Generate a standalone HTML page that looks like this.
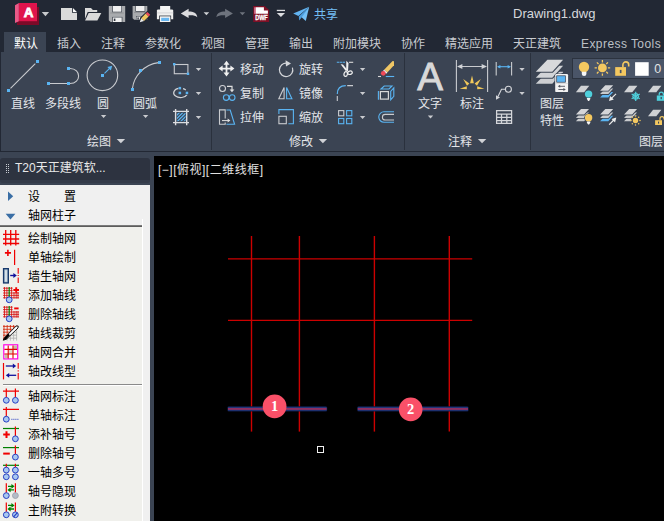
<!DOCTYPE html>
<html lang="zh-CN">
<head>
<meta charset="utf-8">
<title>Drawing1.dwg</title>
<style>
html,body{margin:0;padding:0;}
body{width:664px;height:521px;overflow:hidden;background:#3b4453;position:relative;
 font-family:"Liberation Sans","Noto Sans CJK SC",sans-serif;font-size:12px;color:#e0e0e0;}
.abs{position:absolute;}
.t{position:absolute;white-space:nowrap;line-height:16px;height:16px;font-size:12px;}
#titlebar{left:0;top:0;width:664px;height:31px;background:#222834;}
#tabs{left:0;top:31px;width:664px;height:21px;background:#222834;}
#tabactive{left:4px;top:32px;width:42px;height:20px;background:#3b4453;}
.tab{color:#c9ccd1;top:36px;}
#ribbon{left:1px;top:52px;width:663px;height:99px;background:#3b4453;}
#rline{left:0;top:151px;width:664px;height:1px;background:#222834;}
#ledge{left:0;top:52px;width:1px;height:99px;background:#222834;}
.sep{position:absolute;top:53px;width:1px;height:97px;background:#2a313d;}
.rl{color:#e4e6ea;}
svg{position:absolute;overflow:visible;}
.dd{position:absolute;width:0;height:0;border-left:3px solid transparent;border-right:3px solid transparent;border-top:3px solid #c9ccd1;}
.dd2{position:absolute;width:0;height:0;border-left:4px solid transparent;border-right:4px solid transparent;border-top:4px solid #c9ccd1;}
#canvas{left:154px;top:156px;width:510px;height:365px;background:#000;}
#ptitle{left:0;top:158px;width:150px;height:22px;background:#2d3340;border-radius:3px 3px 0 0;}
#ptitle2{left:0;top:180px;width:150px;height:2.6px;background:#343b49;border-radius:0 0 3px 3px;}
#pbody{left:0;top:185px;width:150px;height:336px;background:#f0f0f0;}
.mi{position:absolute;left:28px;white-space:nowrap;color:#000;font-size:12px;line-height:16px;height:16px;}
</style>
</head>
<body>
<div id="titlebar" class="abs"></div>
<div id="tabs" class="abs"></div>
<div id="tabactive" class="abs"></div>
<div id="ribbon" class="abs"></div>
<div id="rline" class="abs"></div>
<div id="ledge" class="abs"></div>
<div id="canvas" class="abs"></div>
<div id="ptitle" class="abs"></div>
<div id="ptitle2" class="abs"></div>
<div id="pbody" class="abs"></div>


<!-- TITLE ICONS -->
<svg style="left:0;top:0;" width="350" height="31" viewBox="0 0 350 31">
 <!-- logo -->
 <path d="M17,21 H37 V7 H39 V24.9 H17 Z" fill="#7c0a28"/>
 <polygon points="15,5.3 18.9,3 18.9,21.2 15,22.9" fill="#ea5a88"/>
 <rect x="18.9" y="3" width="18.1" height="18.2" fill="#e0144c"/>
 <text x="28.5" y="16.6" font-family="Liberation Sans, sans-serif" font-weight="bold" font-size="13.4" fill="#fff" stroke="#fff" stroke-width="0.8" text-anchor="middle">A</text>
 <polygon points="41.8,11.9 49.1,11.9 45.45,16.2" fill="#c8cacd"/>
 <!-- new -->
 <path d="M61,8 H72 V12.8 H77 V19.9 H61 Z" fill="#dadada"/>
 <path d="M72.9,8.1 L76.9,12 H72.9 Z" fill="#fcfcfc"/>
 <!-- open -->
 <path d="M85,18.8 V8 H91 L92.9,9.9 H97.2 V11.9 H87.7 Z" fill="#dadada"/>
 <path d="M88.7,13.1 H101.3 L97.4,20.4 H85.1 Z" fill="#dadada"/>
 <!-- save -->
 <path d="M108.8,6 H125.2 V22 H110.6 L108.8,20.2 Z" fill="#a9abae"/>
 <rect x="112.2" y="5.4" width="9.8" height="7" fill="#222834" opacity="0.75"/>
 <rect x="112.9" y="6" width="8.4" height="5.7" fill="#f0f0f0"/>
 <rect x="110.2" y="12.6" width="13.6" height="0.8" fill="#8c8e92"/>
 <rect x="112.2" y="16.9" width="10.2" height="5.1" fill="#222834" opacity="0.75"/>
 <rect x="112.9" y="17.5" width="8.8" height="4.5" fill="#f0f0f0"/>
 <rect x="113.8" y="18.6" width="1.6" height="2.4" fill="#30353f"/>
 <!-- save as -->
 <path d="M132.6,6 H147.3 V19.7 H134.2 L132.6,18.2 Z" fill="#a9abae"/>
 <rect x="135.4" y="5.4" width="9.8" height="6.3" fill="#222834" opacity="0.75"/>
 <rect x="136" y="6" width="8.6" height="5" fill="#f0f0f0"/>
 <rect x="134" y="12" width="12" height="0.8" fill="#8c8e92"/>
 <rect x="136" y="16" width="5.6" height="3.7" fill="#222834" opacity="0.75"/>
 <rect x="136.6" y="16.6" width="4.4" height="3.1" fill="#f0f0f0"/>
 <rect x="137.4" y="17.4" width="1.4" height="2.3" fill="#30353f"/>
 <polygon points="138.6,23.4 140.2,17.6 147.4,10.8 151.4,14.8 144.4,22" fill="#222834"/>
 <polygon points="141.2,18.2 145.8,13.6 148.6,16.4 144,21" fill="#f0c860"/>
 <polygon points="145.8,13.6 147.4,12 150.2,14.8 148.6,16.4" fill="#ec4a5a"/>
 <polygon points="139.8,22.2 141.2,18.2 144,21" fill="#ececec"/>
 <!-- print -->
 <rect x="160.1" y="6" width="10.1" height="4.4" fill="#f4f4f4"/>
 <path d="M156.9,10.6 Q156.9,9.4 158.1,9.4 H172 Q173.2,9.4 173.2,10.6 V19.2 H156.9 Z" fill="#f0f0f0"/>
 <rect x="156.9" y="12.4" width="16.3" height="1" fill="#d4d5d8"/>
 <rect x="159.2" y="15.6" width="11.9" height="6.8" fill="#222834"/>
 <rect x="159.9" y="16.3" width="10.5" height="5.7" fill="#f4f4f4"/>
 <rect x="161.2" y="17.8" width="7.9" height="3.2" fill="#68b6f0"/>
 <!-- undo -->
 <path d="M180.8,13.4 L188.6,8.7 V11.5 C193.6,11.5 196.8,13 197.3,17.2 C195.2,15.4 192.8,15.1 188.6,15.3 V18.1 Z" fill="#dcdcde"/>
 <polygon points="203.6,12.2 209.2,12.2 206.4,15.3" fill="#d0d2d5"/>
 <!-- redo -->
 <path d="M232.9,13.4 L225.1,8.7 V11.5 C220.1,11.5 216.9,13 216.4,17.2 C218.5,15.4 220.9,15.1 225.1,15.3 V18.1 Z" fill="#6e737d"/>
 <polygon points="239.6,12.2 245.2,12.2 242.4,15.3" fill="#6e737d"/>
 <!-- dwf -->
 <path d="M253.2,6 H264.6 L269.1,10 V21.9 H253.2 Z" fill="#7e1026"/>
 <path d="M255.8,7.3 H263.9 V10.5 H267.9 V13.8 H255.8 Z" fill="#ffffff"/>
 <rect x="254.3" y="7.3" width="1.5" height="6.5" fill="#e88ca6"/>
 <text x="261.45" y="19.9" font-family="Liberation Sans, sans-serif" font-weight="bold" font-size="6.4" fill="#fff" stroke="#fff" stroke-width="0.3" text-anchor="middle" textLength="12.6" lengthAdjust="spacingAndGlyphs">DWF</text>
 <!-- customize -->
 <rect x="276.8" y="9.8" width="8.2" height="1.3" fill="#dcdde0"/>
 <polygon points="276.8,12.9 285,12.9 280.9,17.1" fill="#dcdde0"/>
 <!-- share plane -->
 <polygon points="293.2,13.6 309.2,6.7 298.4,16" fill="#62b4f2"/>
 <polygon points="309.2,6.7 305.8,20.9 300.8,16.6" fill="#74c0f6"/>
 <polygon points="309.2,6.7 298.8,16.6 299.2,20.6 301.6,17.6" fill="#4c9ede"/>
</svg>
<!-- TITLE -->
<div class="t" style="left:314px;top:7px;color:#74bef4;">共享</div>
<div class="t" style="left:513px;top:6px;color:#d6d8dc;font-size:13px;letter-spacing:0px;">Drawing1.dwg</div>

<!-- TABS -->
<div class="t tab" style="left:14px;color:#fff;">默认</div>
<div class="t tab" style="left:57px;">插入</div>
<div class="t tab" style="left:101px;">注释</div>
<div class="t tab" style="left:145px;">参数化</div>
<div class="t tab" style="left:201px;">视图</div>
<div class="t tab" style="left:245px;">管理</div>
<div class="t tab" style="left:289px;">输出</div>
<div class="t tab" style="left:333px;">附加模块</div>
<div class="t tab" style="left:401px;">协作</div>
<div class="t tab" style="left:445px;">精选应用</div>
<div class="t tab" style="left:513px;">天正建筑</div>
<div class="t tab" style="left:581px;letter-spacing:0.43px;color:#bcc0c6;">Express Tools</div>

<!-- RIBBON LABELS -->
<div class="t rl" style="left:11px;top:96px;">直线</div>
<div class="t rl" style="left:45px;top:96px;">多段线</div>
<div class="t rl" style="left:97px;top:96px;">圆</div>
<div class="t rl" style="left:133px;top:96px;">圆弧</div>
<div class="t rl" style="left:87px;top:134px;">绘图</div>
<div class="t rl" style="left:240px;top:62px;">移动</div>
<div class="t rl" style="left:240px;top:86px;">复制</div>
<div class="t rl" style="left:240px;top:110px;">拉伸</div>
<div class="t rl" style="left:299px;top:62px;">旋转</div>
<div class="t rl" style="left:299px;top:86px;">镜像</div>
<div class="t rl" style="left:299px;top:110px;">缩放</div>
<div class="t rl" style="left:289px;top:134px;">修改</div>
<div class="t rl" style="left:418px;top:96px;">文字</div>
<div class="t rl" style="left:460px;top:96px;">标注</div>
<div class="t rl" style="left:448px;top:134px;">注释</div>
<div class="t rl" style="left:540px;top:96px;">图层</div>
<div class="t rl" style="left:540px;top:113px;">特性</div>
<div class="t rl" style="left:639px;top:134px;">图层</div>

<div class="sep" style="left:211px;"></div>
<div class="sep" style="left:404px;"></div>
<div class="sep" style="left:530px;"></div>

<!-- RIBBON ICONS -->
<svg style="left:0;top:0;" width="664" height="160" viewBox="0 0 664 160">
<line x1="10.5" y1="88.3" x2="35.3" y2="63.6" stroke="#c9cbcf" stroke-width="1.1"/>
<rect x="7" y="89" width="3" height="3" fill="#5ab4f2"/>
<rect x="36" y="60" width="3" height="3" fill="#5ab4f2"/>
<path d="M50,83.5 H67 M70,83.5 C81.5,83.5 81.5,68.5 70,68.5" fill="none" stroke="#c9cbcf" stroke-width="1.1"/>
<rect x="47" y="82" width="3" height="3" fill="#5ab4f2"/>
<rect x="67" y="82" width="3" height="3" fill="#5ab4f2"/>
<rect x="67" y="67" width="3" height="3" fill="#5ab4f2"/>
<circle cx="102.4" cy="75.3" r="15.3" fill="none" stroke="#c9cbcf" stroke-width="1.1"/>
<rect x="101" y="74" width="3" height="3" fill="#5ab4f2"/>
<line x1="104.5" y1="73.3" x2="109.6" y2="68.3" stroke="#5ab4f2" stroke-width="1.1"/>
<polygon points="112.2,65.8 110.9,70.6 107.4,67.1" fill="#5ab4f2"/>
<path d="M132.5,88 C134,76 144,64.5 158.5,62.6" fill="none" stroke="#c9cbcf" stroke-width="1.1"/>
<rect x="131" y="88" width="3" height="3" fill="#5ab4f2"/>
<rect x="139" y="69" width="3" height="3" fill="#5ab4f2"/>
<rect x="158" y="61" width="3" height="3" fill="#5ab4f2"/>
<polygon points="100.89999999999999,115 106.3,115 103.6,118" fill="#c9cbcf"/>
<polygon points="142.9,115 148.29999999999998,115 145.6,118" fill="#c9cbcf"/>
<polygon points="116.7,138.9 125.1,138.9 120.9,143.3" fill="#d0d2d6"/>
<rect x="174.3" y="64.5" width="13.6" height="9.2" fill="none" stroke="#c9cbcf" stroke-width="1.1"/>
<rect x="173" y="63" width="2.4" height="2.4" fill="#5ab4f2"/>
<rect x="186.8" y="72.6" width="2.4" height="2.4" fill="#5ab4f2"/>
<polygon points="195.8,68 201.2,68 198.5,71" fill="#c9cbcf"/>
<path d="M178.4,88.4 A6.9,4.7 0 1 0 187,94.6" fill="none" stroke="#d0d2d6" stroke-width="1.2"/>
<path d="M183,88.6 A6.9,4.7 0 0 1 185.8,89.9" fill="none" stroke="#d0d2d6" stroke-width="1.2"/>
<rect x="178.6" y="86.9" width="2.5" height="2.5" fill="#5ab4f2"/>
<rect x="178.6" y="91.7" width="2.5" height="2.5" fill="#5ab4f2"/>
<rect x="185" y="91" width="3.8" height="3.8" fill="#3b4453"/><rect x="185.7" y="91.7" width="2.5" height="2.5" fill="#5ab4f2"/>
<polygon points="195.8,92 201.2,92 198.5,95" fill="#c9cbcf"/>
<path d="M173,111.4 H189 M173,122.6 H189 M175.6,109 V125.2 M186.7,109 V125.2" fill="none" stroke="#dcdde0" stroke-width="1.4"/>
<clipPath id="hc"><rect x="176.9" y="112.8" width="8.7" height="8.5"/></clipPath>
<path clip-path="url(#hc)" d="M175,117 L181,111 M175,120.4 L184.4,111 M176.6,122.2 L187,111.8 M180,122.2 L187,115.2 M183.4,122.2 L187,118.6" stroke="#5ab4f2" stroke-width="1.25" fill="none"/>
<polygon points="195.8,116 201.2,116 198.5,119" fill="#c9cbcf"/>
<path d="M226.5,63 V74.4 M221,68.6 H232.2" stroke="#f0f0f0" stroke-width="1.8" fill="none"/>
<polygon points="226.5,60.8 229.5,64.8 223.5,64.8" fill="#f0f0f0"/><polygon points="226.5,76.4 229.5,72.4 223.5,72.4" fill="#f0f0f0"/><polygon points="218.6,68.6 222.6,65.6 222.6,71.6" fill="#f0f0f0"/><polygon points="234.4,68.6 230.4,65.6 230.4,71.6" fill="#f0f0f0"/>
<circle cx="222.5" cy="88.5" r="3" fill="none" stroke="#d0d2d6" stroke-width="1.1"/>
<path d="M227,86.4 H232 V90" fill="none" stroke="#e0e0e0" stroke-width="1.2"/><polygon points="229.6,89.4 234.4,89.4 232,92.2" fill="#e0e0e0"/>
<circle cx="226.2" cy="97.6" r="2.8" fill="none" stroke="#5ab4f2" stroke-width="1.1"/><circle cx="232.2" cy="97.6" r="2.8" fill="none" stroke="#5ab4f2" stroke-width="1.1"/>
<path d="M225.2,118.6 V109.9 H219.5 V124.2 H225.2 V122.6" fill="none" stroke="#c9cbcf" stroke-width="1.1"/>
<path d="M226.4,110 H230.2 L234.6,124.3 H226.4" fill="none" stroke="#5ab4f2" stroke-width="1.1"/>
<line x1="222" y1="120.6" x2="228" y2="120.6" stroke="#e0e0e0" stroke-width="1"/><polygon points="230.4,120.6 227.6,118.6 227.6,122.6" fill="#e0e0e0"/>
<path d="M287.3,63.3 A6.7,6.7 0 1 0 292.4,67.6" fill="none" stroke="#d4d6da" stroke-width="1.2"/>
<polygon points="291,63.6 285.6,60.2 286,66.6" fill="#d4d6da"/>
<polygon points="278.8,98.8 284.1,98.8 284.1,87.6" fill="none" stroke="#c9cbcf" stroke-width="1.1"/>
<polygon points="286.6,87.6 286.6,98.8 291.9,98.8" fill="none" stroke="#5ab4f2" stroke-width="1.1"/>
<rect x="278.9" y="116.3" width="7.4" height="7.4" fill="none" stroke="#c9cbcf" stroke-width="1.1"/>
<path d="M278.9,114 V109.6 H293.4 V123.7 H288.4" fill="none" stroke="#5ab4f2" stroke-width="1.1"/>
<polygon points="318.7,138.9 327.1,138.9 322.9,143.3" fill="#d0d2d6"/>
<line x1="336.8" y1="62.3" x2="345" y2="62.3" stroke="#5ab4f2" stroke-width="1.1" stroke-dasharray="2.4 0.5"/>
<line x1="349" y1="62.3" x2="353.2" y2="62.3" stroke="#d8d8d8" stroke-width="1.1"/>
<polygon points="340.6,64.2 343,64.4 347.4,70 345.8,71" fill="#f0f0f0"/><polygon points="346.3,60.8 348.5,63 348,71.2 346.2,70.6" fill="#f0f0f0"/>
<ellipse cx="345.7" cy="74" rx="1.7" ry="2.4" fill="none" stroke="#f0f0f0" stroke-width="1.2" transform="rotate(12 345.7 74)"/><ellipse cx="350" cy="72.7" rx="2.3" ry="1.7" fill="none" stroke="#f0f0f0" stroke-width="1.2" transform="rotate(-15 350 72.7)"/>
<polygon points="359.90000000000003,68 365.3,68 362.6,71" fill="#c9cbcf"/>
<polygon points="392.6,61 394,61.2 394,65.2 387.3,72.5 384.1,69.7" fill="#f0c765"/><polygon points="384.1,69.7 387.3,72.5 386.2,73.7 383,70.9" fill="#f4f4f4"/>
<circle cx="383.3" cy="73.3" r="2.4" fill="#f04a58"/>
<line x1="378" y1="76.5" x2="381" y2="76.5" stroke="#d8d8d8" stroke-width="1.1"/><line x1="385.8" y1="76.5" x2="394.2" y2="76.5" stroke="#5ab4f2" stroke-width="1.1"/>
<path d="M337.3,94 C337.3,88.5 340.5,85.6 345.8,85.6" fill="none" stroke="#5ab4f2" stroke-width="1.2"/>
<path d="M337.3,96 V101 M347.2,85.6 H353" fill="none" stroke="#c9cbcf" stroke-width="1.1"/>
<polygon points="359.90000000000003,92 365.3,92 362.6,95" fill="#c9cbcf"/>
<rect x="380.4" y="91.6" width="8" height="7.5" fill="none" stroke="#d8d8d8" stroke-width="1.2"/>
<path d="M378.4,91 V99.8 M381,89 L384.2,86 H392 L389,89 Z M390.7,91.4 L393.8,88 V96.4 L390.7,99.8 Z" fill="none" stroke="#5ab4f2" stroke-width="1.1"/>
<rect x="338.6" y="110.6" width="5.2" height="5.2" fill="none" stroke="#c9cbcf" stroke-width="1.1"/>
<rect x="346.6" y="110.6" width="5.2" height="5.2" fill="none" stroke="#5ab4f2" stroke-width="1.1"/>
<rect x="338.6" y="118.5" width="5.2" height="5.2" fill="none" stroke="#5ab4f2" stroke-width="1.1"/>
<rect x="346.6" y="118.5" width="5.2" height="5.2" fill="none" stroke="#5ab4f2" stroke-width="1.1"/>
<polygon points="359.90000000000003,116 365.3,116 362.6,119" fill="#c9cbcf"/>
<path d="M394,111.8 H384 A5.25,5.25 0 0 0 384,122.3 H394" fill="none" stroke="#5ab4f2" stroke-width="1.1"/>
<path d="M394,114.4 H385.2 A2.8,2.8 0 0 0 385.2,120 H394" fill="none" stroke="#c9cbcf" stroke-width="1.1"/>
<text x="430.2" y="89.6" font-family="Liberation Sans, sans-serif" font-size="38.6" fill="#d8d8d8" stroke="#d8d8d8" stroke-width="0.9" text-anchor="middle">A</text>
<polygon points="427.8,115.4 433.2,115.4 430.5,118.4" fill="#c9cbcf"/>
<path d="M456.4,60 V92 M487.6,60 V92 M458,66.5 H486" fill="none" stroke="#c9cbcf" stroke-width="1.1"/>
<polygon points="457,66.5 462.4,64 462.4,69" fill="#d0d2d6"/><polygon points="487,66.5 481.6,64 481.6,69" fill="#d0d2d6"/>
<polygon points="472,75.4 473.9,83.2 470.1,83.2" fill="#f2c85a"/>
<polygon points="463.2,79 469.4,83.4 467,85.8" fill="#f2c85a"/><polygon points="480.8,79 474.6,83.4 477,85.8" fill="#f2c85a"/>
<polygon points="459.6,88.7 466.8,86.2 466.8,89.2" fill="#f2c85a"/><polygon points="484.4,88.7 477.2,86.2 477.2,89.2" fill="#f2c85a"/>
<path d="M496.2,62 V75.6 M511.6,62 V75.6" fill="none" stroke="#c9cbcf" stroke-width="1.1"/>
<line x1="498" y1="66.7" x2="510" y2="66.7" stroke="#5ab4f2" stroke-width="1.1"/><polygon points="497,66.7 500.4,65 500.4,68.4" fill="#5ab4f2"/><polygon points="511,66.7 507.6,65 507.6,68.4" fill="#5ab4f2"/>
<polygon points="519.3,68 524.7,68 522,71" fill="#c9cbcf"/>
<circle cx="508.4" cy="89.2" r="3" fill="none" stroke="#d4d6da" stroke-width="1.1"/>
<path d="M505.2,89.2 H501.5 L498,96.4" fill="none" stroke="#d4d6da" stroke-width="1.1"/><polygon points="496,99.8 496,95.2 500,97.5" fill="#d4d6da"/>
<polygon points="519.3,92 524.7,92 522,95" fill="#c9cbcf"/>
<path d="M496.6,110.6 H511.6 V123.4 H496.6 Z M496.6,114.2 H511.6 M496.6,117.4 H511.6 M496.6,120.5 H511.6 M501.5,114.2 V123.4 M506.8,114.2 V123.4" fill="none" stroke="#d4d6da" stroke-width="1.25"/>

<polygon points="477.9,138.9 486.3,138.9 482.1,143.3" fill="#d0d2d6"/>
</svg>
<!-- LAYERS -->
<svg style="left:0;top:0;" width="664" height="160" viewBox="0 0 664 160">
<polygon points="547.4,71.8 563.1,71.8 552.3,83.7 535.8,83.7" fill="#3b4453" stroke="#3b4453" stroke-width="2.3"/><polygon points="547.4,71.8 563.1,71.8 552.3,83.7 535.8,83.7" fill="#cdcfd2"/>
<polygon points="547.4,65.8 563.1,65.8 552.3,77.7 535.8,77.7" fill="#3b4453" stroke="#3b4453" stroke-width="2.3"/><polygon points="547.4,65.8 563.1,65.8 552.3,77.7 535.8,77.7" fill="#d2d4d7"/>
<polygon points="547.4,59.8 563.1,59.8 552.3,71.7 535.8,71.7" fill="#3b4453" stroke="#3b4453" stroke-width="2.3"/><polygon points="547.4,59.8 563.1,59.8 552.3,71.7 535.8,71.7" fill="#d8d9db"/>
<rect x="554.6" y="73.4" width="14" height="19.2" rx="1.8" fill="#3b4453"/>
<rect x="555.2" y="74" width="12.9" height="18.1" rx="1.2" fill="#f2f2f2"/>
<rect x="558.9" y="72" width="3.8" height="1" fill="#d0d2d6"/>
<rect x="556.7" y="75.8" width="8.8" height="6.4" fill="#5ab4f2" stroke="#3a4150" stroke-width="0.7"/>
<rect x="555.2" y="83" width="12.9" height="0.7" fill="#d4d4d4"/>
<path d="M559,86.3 H565 M558.4,89.5 H564.4" stroke="#50555f" stroke-width="0.9" fill="none"/>
<polygon points="557.8,86.3 560.2,84.8 560.2,87.8" fill="#50555f"/><polygon points="565.8,89.5 563.4,88 563.4,91" fill="#50555f"/>
<rect x="572.5" y="58.5" width="95" height="20" fill="#4a5568" stroke="#2c333f" stroke-width="1"/>
<circle cx="584" cy="67" r="5.2" fill="#f4c860"/><rect x="581.7" y="70" width="4.6" height="1.7" fill="#f4c860"/><path d="M581.8,71.7 H586.4 V74 Q586.4,75.9 584.1,75.9 Q581.8,75.9 581.8,74 Z" fill="#f6f6f6"/>
<circle cx="602.4" cy="67.9" r="4.4" fill="#f4c860"/>
<path d="M607.90,67.90 L610.20,67.90 M606.29,71.79 L607.92,73.42 M602.40,73.40 L602.40,75.70 M598.51,71.79 L596.88,73.42 M596.90,67.90 L594.60,67.90 M598.51,64.01 L596.88,62.38 M602.40,62.40 L602.40,60.10 M606.29,64.01 L607.92,62.38" stroke="#f4c860" stroke-width="1.3" fill="none"/>
<rect x="615.2" y="67.1" width="10.8" height="8.7" fill="#f4c860"/><rect x="619.8" y="69.9" width="1.7" height="3.2" fill="#4a5568"/>
<path d="M622.9,67.2 V64.8 A2.9,2.9 0 0 1 628.7,64.8 V66.4" fill="none" stroke="#f4c860" stroke-width="1.6"/>
<rect x="635.1" y="62.2" width="13.6" height="13.6" fill="#ffffff"/>
<text x="654.2" y="73" font-family="Liberation Sans, sans-serif" font-size="12.5" fill="#e4e4e4">0</text>
<polygon points="581.0,85.8 589.3,85.8 584.2,92.2 575.9,92.2" fill="#cfd1d4"/>
<circle cx="588.6" cy="94.1" r="4.3" fill="#3b4453"/><circle cx="588.6" cy="94.1" r="3.7" fill="#4fd0dc"/><path d="M586.9,98.0 H590.3000000000001 V99.1 L589.1,100.89999999999999 H588.1 L586.9,99.1 Z" fill="#f4f4f4"/>
<polygon points="605.3,91.9 613.2,91.9 608.3,97.4 600.1,97.4" fill="#3b4453" stroke="#3b4453" stroke-width="1.6"/><polygon points="605.3,91.9 613.2,91.9 608.3,97.4 600.1,97.4" fill="#5ab4f2"/><polygon points="605.3,88.6 613.2,88.6 608.3,94.1 600.1,94.1" fill="#3b4453" stroke="#3b4453" stroke-width="1.6"/><polygon points="605.3,88.6 613.2,88.6 608.3,94.1 600.1,94.1" fill="#c8cacd"/><polygon points="605.3,85.3 613.2,85.3 608.3,90.8 600.1,90.8" fill="#3b4453" stroke="#3b4453" stroke-width="1.6"/><polygon points="605.3,85.3 613.2,85.3 608.3,90.8 600.1,90.8" fill="#d4d5d8"/>
<line x1="616" y1="93.8" x2="611.4" y2="98.4" stroke="#ececec" stroke-width="1.2"/><polygon points="609.0,100.9 610.2,96.0 613.8,99.6" fill="#ececec"/>
<polygon points="629.1,85.8 637.4,85.8 632.3,92.2 624.0,92.2" fill="#cfd1d4"/>
<circle cx="635.7" cy="96.4" r="5" fill="#3b4453"/><path d="M635.70,91.70 L635.70,101.10 M639.77,94.05 L631.63,98.75 M639.77,98.75 L631.63,94.05" stroke="#4fd0dc" stroke-width="1.25" fill="none"/><polygon points="638.60,96.40 637.15,98.91 634.25,98.91 632.80,96.40 634.25,93.89 637.15,93.89" fill="none" stroke="#4fd0dc" stroke-width="1.1"/>
<polygon points="653.1,85.8 661.4,85.8 656.3,92.2 648.0,92.2" fill="#cfd1d4"/>
<rect x="656.2" y="94.9" width="8" height="6.5" fill="#3b4453"/><rect x="656.8" y="95.5" width="8" height="5.3" fill="#4fd0dc"/><path d="M659.2,95.5 V94.2 A2.1,2.1 0 0 1 663.4,94.2 V95.5" fill="none" stroke="#4fd0dc" stroke-width="1.2"/><rect x="660.6" y="97" width="1.2" height="2.2" fill="#3b4453"/>
<polygon points="581.1,115.7 589.0,115.7 584.1,121.2 575.9,121.2" fill="#3b4453" stroke="#3b4453" stroke-width="1.6"/><polygon points="581.1,115.7 589.0,115.7 584.1,121.2 575.9,121.2" fill="#c8cacd"/><polygon points="581.1,112.4 589.0,112.4 584.1,117.9 575.9,117.9" fill="#3b4453" stroke="#3b4453" stroke-width="1.6"/><polygon points="581.1,112.4 589.0,112.4 584.1,117.9 575.9,117.9" fill="#c8cacd"/><polygon points="581.1,109.1 589.0,109.1 584.1,114.6 575.9,114.6" fill="#3b4453" stroke="#3b4453" stroke-width="1.6"/><polygon points="581.1,109.1 589.0,109.1 584.1,114.6 575.9,114.6" fill="#d4d5d8"/>
<circle cx="588.6" cy="117.7" r="4.3" fill="#3b4453"/><circle cx="588.6" cy="117.7" r="3.7" fill="#f4c860"/><path d="M586.9,121.60000000000001 H590.3000000000001 V122.7 L589.1,124.5 H588.1 L586.9,122.7 Z" fill="#f4f4f4"/>
<polygon points="605.3,115.7 613.2,115.7 608.3,121.2 600.1,121.2" fill="#3b4453" stroke="#3b4453" stroke-width="1.6"/><polygon points="605.3,115.7 613.2,115.7 608.3,121.2 600.1,121.2" fill="#5ab4f2"/><polygon points="605.3,112.4 613.2,112.4 608.3,117.9 600.1,117.9" fill="#3b4453" stroke="#3b4453" stroke-width="1.6"/><polygon points="605.3,112.4 613.2,112.4 608.3,117.9 600.1,117.9" fill="#c8cacd"/><polygon points="605.3,109.1 613.2,109.1 608.3,114.6 600.1,114.6" fill="#3b4453" stroke="#3b4453" stroke-width="1.6"/><polygon points="605.3,109.1 613.2,109.1 608.3,114.6 600.1,114.6" fill="#d4d5d8"/>
<line x1="609.2" y1="124.6" x2="613.8" y2="120" stroke="#ececec" stroke-width="1.2"/><polygon points="616.3,117.6 615.1,122.5 611.5,118.9" fill="#ececec"/>
<polygon points="629.2,115.7 637.1,115.7 632.2,121.2 624.0,121.2" fill="#3b4453" stroke="#3b4453" stroke-width="1.6"/><polygon points="629.2,115.7 637.1,115.7 632.2,121.2 624.0,121.2" fill="#c8cacd"/><polygon points="629.2,112.4 637.1,112.4 632.2,117.9 624.0,117.9" fill="#3b4453" stroke="#3b4453" stroke-width="1.6"/><polygon points="629.2,112.4 637.1,112.4 632.2,117.9 624.0,117.9" fill="#c8cacd"/><polygon points="629.2,109.1 637.1,109.1 632.2,114.6 624.0,114.6" fill="#3b4453" stroke="#3b4453" stroke-width="1.6"/><polygon points="629.2,109.1 637.1,109.1 632.2,114.6 624.0,114.6" fill="#d4d5d8"/>
<circle cx="635.5" cy="120.5" r="4.6" fill="#3b4453"/><circle cx="635.5" cy="120.5" r="2.7" fill="#f4c860"/><circle cx="640.00" cy="120.50" r="0.75" fill="#f4c860"/><circle cx="638.68" cy="123.68" r="0.75" fill="#f4c860"/><circle cx="635.50" cy="125.00" r="0.75" fill="#f4c860"/><circle cx="632.32" cy="123.68" r="0.75" fill="#f4c860"/><circle cx="631.00" cy="120.50" r="0.75" fill="#f4c860"/><circle cx="632.32" cy="117.32" r="0.75" fill="#f4c860"/><circle cx="635.50" cy="116.00" r="0.75" fill="#f4c860"/><circle cx="638.68" cy="117.32" r="0.75" fill="#f4c860"/>
<polygon points="653.1,109.8 661.4,109.8 656.3,116.2 648.0,116.2" fill="#cfd1d4"/>
<rect x="654.5" y="119.6" width="8.1" height="6" fill="#3b4453"/><rect x="655.1" y="120.2" width="6.9" height="4.8" fill="#f4c860"/><path d="M660,120.2 V118.6 A2,2 0 0 1 664,118.6 V119.6" fill="none" stroke="#f4c860" stroke-width="1.2"/><rect x="658" y="121.6" width="1.1" height="2" fill="#3b4453"/>
</svg>
<!-- PANEL -->
<svg style="left:0;top:0;" width="154" height="521" viewBox="0 0 154 521">
<rect x="0" y="227" width="142" height="294" fill="#f0f0ec"/>
<rect x="0" y="225" width="142" height="1" fill="#7a7a7a"/><rect x="0" y="226" width="142" height="1" fill="#5c5c5c"/>
<rect x="142" y="219" width="1" height="302" fill="#ffffff"/>
<rect x="3" y="384" width="139" height="1" fill="#8a8a8a"/><rect x="3" y="385" width="139" height="1" fill="#ffffff"/>
<rect x="6" y="164" width="1" height="1" fill="#c8ccd2"/>
<rect x="8" y="164" width="1" height="1" fill="#c8ccd2"/>
<rect x="6" y="166" width="1" height="1" fill="#c8ccd2"/>
<rect x="8" y="166" width="1" height="1" fill="#c8ccd2"/>
<rect x="6" y="168" width="1" height="1" fill="#c8ccd2"/>
<rect x="8" y="168" width="1" height="1" fill="#c8ccd2"/>
<rect x="6" y="170" width="1" height="1" fill="#c8ccd2"/>
<rect x="8" y="170" width="1" height="1" fill="#c8ccd2"/>
<rect x="6" y="172" width="1" height="1" fill="#c8ccd2"/>
<rect x="8" y="172" width="1" height="1" fill="#c8ccd2"/>
<polygon points="8,191.6 13.2,196.3 8,201" fill="#3a6ea5"/>
<polygon points="5.6,213.8 15.4,213.8 10.5,219.4" fill="#3a6ea5"/>
<path d="M3,234.4 H19.2 M3,239 H19.2 M3,243.5 H19.2 M5.7,230 V245.6 M10.7,230 V245.6 M15.8,230 V245.6" stroke="#f00000" stroke-width="1.3" fill="none"/>
<path d="M4.9,252.9 H11 M7.9,249.8 V256" stroke="#f00000" stroke-width="1.6" fill="none"/>
<path d="M14.6,249.8 V265" stroke="#f00000" stroke-width="1.2" fill="none"/>
<rect x="3.6" y="268.7" width="4.7" height="14.2" fill="#b8ccd8" stroke="#183a6c" stroke-width="1.4"/>
<rect x="5.3" y="270.4" width="1.3" height="10.8" fill="#e4ecf0"/>
<path d="M10.2,275.5 H14.4" stroke="#10109c" stroke-width="1.4" fill="none"/>
<polygon points="16.8,275.5 13.4,272.9 13.4,278.1" fill="#10109c"/>
<path d="M18.2,268 V273.8 M18.2,275 V276 M18.2,277.6 V283" stroke="#f00000" stroke-width="1.1" fill="none"/>
<path d="M3,288.2 H12.6 M3,290.6 H12.6 M3,293.0 H19 M3,295.4 H19 M3,297.8 H19 M4.5,287 V298.6 M6.9,287 V298.6 M11.6,287 V298.6 M14,292 V298.6 M16.2,292 V298.6 M18,292 V298.6 " stroke="#d40000" stroke-width="0.75" fill="none"/><path d="M9.2,287 V297" stroke="#008000" stroke-width="1.2" fill="none"/><path d="M13.4,290 H19 M16.2,287.2 V292.8" stroke="#f00000" stroke-width="1.9" fill="none"/><circle cx="9.2" cy="299.8" r="2.9" fill="#a8c8f0" stroke="#2038c0" stroke-width="0.95"/>
<path d="M3,307.2 H12.6 M3,309.6 H12.6 M3,312.0 H19 M3,314.4 H19 M3,316.8 H19 M4.5,306 V317.6 M6.9,306 V317.6 M11.6,306 V317.6 M14,311 V317.6 M16.2,311 V317.6 M18,311 V317.6 " stroke="#d40000" stroke-width="0.75" fill="none"/><path d="M9.2,306 V316" stroke="#008000" stroke-width="1.2" fill="none"/><path d="M14.2,308.4 H18.6" stroke="#f00000" stroke-width="1.9" fill="none"/><circle cx="9.2" cy="318.8" r="2.9" fill="#a8c8f0" stroke="#2038c0" stroke-width="0.95"/>
<clipPath id="tl"><polygon points="3,325 17,325 3,340"/></clipPath><clipPath id="br"><polygon points="18,326 18,341 4,341"/></clipPath>
<g clip-path="url(#tl)"><path d="M3,326.4 H17 M3,329.3 H17 M3,332.2 H17 M3,335.2 H17 M3,338.2 H17 M4,325 V340.6 M7.2,325 V340.6 M10.4,325 V340.6 M13.6,325 V340.6 M16.6,325 V340.6" stroke="#d02000" stroke-width="0.8" fill="none"/></g><g clip-path="url(#br)"><path d="M3,326.4 H17 M3,329.3 H17 M3,332.2 H17 M3,335.2 H17 M3,338.2 H17 M4,325 V340.6 M7.2,325 V340.6 M10.4,325 V340.6 M13.6,325 V340.6 M16.6,325 V340.6" stroke="#b0b0b0" stroke-width="0.8" fill="none"/></g>
<path d="M3.2,340.2 L4.6,337.6 L16.2,326 L18.2,326 L18,328 L6.4,339.2 Z" fill="#ffffff" stroke="#000000" stroke-width="0.9"/>
<path d="M3.2,340.2 L4.6,337.6 L8.4,333.8 L9.8,335.2 L6.4,339.2 Z" fill="#000000"/>
<rect x="3.8" y="344.8" width="13.9" height="14.1" fill="#ffffff" stroke="#ff00e8" stroke-width="1.2"/>
<rect x="13.4" y="345.6" width="3.6" height="4" fill="#c8c0a8"/><rect x="4.6" y="354.4" width="3.4" height="3.8" fill="#c8c0a8"/><rect x="8.6" y="350" width="4.2" height="4" fill="#ddd8c8"/>
<path d="M4.4,349.4 H17 M4.4,354 H17 M8.2,345.4 V358.4 M13,345.4 V358.4" stroke="#e00000" stroke-width="1.1" fill="none"/>
<path d="M3.5,363 V379.4" stroke="#f00000" stroke-width="1.2" fill="none"/>
<path d="M18.2,363 V368.8 M18.2,370.2 V371.4 M18.2,373 V379.4" stroke="#f00000" stroke-width="1.1" fill="none"/>
<path d="M5.8,366 H13.4" stroke="#10109c" stroke-width="1.3" fill="none"/>
<polygon points="16.2,366 12.8,363.6 12.8,368.4" fill="#10109c"/>
<path d="M8.6,375.3 H16.2" stroke="#10109c" stroke-width="1.3" fill="none"/>
<polygon points="5.8,375.3 9.2,372.9 9.2,377.7" fill="#10109c"/>
<path d="M3,391.2 H19 M6.3,388.4 V397.6 M15.4,388.4 V397.6" stroke="#f00000" stroke-width="1.2" fill="none"/>
<circle cx="6.3" cy="400.3" r="2.9" fill="#a8c8f0" stroke="#2038c0" stroke-width="0.95"/>
<circle cx="15.4" cy="400.3" r="2.9" fill="#a8c8f0" stroke="#2038c0" stroke-width="0.95"/>
<path d="M3,409.3 H19 M6.3,407 V416.4" stroke="#f00000" stroke-width="1.2" fill="none"/>
<circle cx="6.3" cy="419.2" r="2.9" fill="#a8c8f0" stroke="#2038c0" stroke-width="0.95"/>
<path d="M11.4,419.3 H19" stroke="#2038c0" stroke-width="1" stroke-dasharray="1 1" fill="none"/>
<path d="M3,428.5 H19" stroke="#008000" stroke-width="1.2" fill="none"/>
<path d="M15.4,426.6 V436" stroke="#f00000" stroke-width="1.2" fill="none"/>
<circle cx="15.4" cy="438.8" r="2.9" fill="#a8c8f0" stroke="#2038c0" stroke-width="0.95"/>
<path d="M3.2,434.6 H9.8 M6.5,431.3 V437.9" stroke="#f00000" stroke-width="2" fill="none"/>
<path d="M3,447.6 H19" stroke="#008000" stroke-width="1.2" fill="none"/>
<path d="M15.4,445.6 V454.4" stroke="#f00000" stroke-width="1.2" fill="none"/>
<circle cx="15.4" cy="457.1" r="2.9" fill="#a8c8f0" stroke="#2038c0" stroke-width="0.95"/>
<path d="M3.2,453.6 H9.8" stroke="#f00000" stroke-width="2" fill="none"/>
<path d="M3,465.3 H19" stroke="#008000" stroke-width="1.2" fill="none"/>
<path d="M6.3,463.8 V467.4 M15.4,463.8 V467.4" stroke="#f00000" stroke-width="1.2" fill="none"/>
<circle cx="6.3" cy="470.1" r="2.9" fill="#a8c8f0" stroke="#2038c0" stroke-width="0.95"/>
<circle cx="6.3" cy="476.8" r="2.9" fill="#a8c8f0" stroke="#2038c0" stroke-width="0.95"/>
<circle cx="15.4" cy="470.1" r="2.9" fill="#a8c8f0" stroke="#2038c0" stroke-width="0.95"/>
<circle cx="15.4" cy="476.8" r="2.9" fill="#a8c8f0" stroke="#2038c0" stroke-width="0.95"/>
<path d="M6.3,483.3 V492.7 M15.4,483.3 V492.7" stroke="#f00000" stroke-width="1.2" fill="none"/><path d="M8,486.3 H12.6 M9.6,489.90000000000003 H14" stroke="#008000" stroke-width="1.3" fill="none"/><polygon points="14.6,486.3 11.4,483.90000000000003 11.4,488.7" fill="#008000"/><polygon points="7.4,489.90000000000003 10.6,487.5 10.6,492.3" fill="#008000"/>
<circle cx="6.3" cy="495.6" r="2.9" fill="#a8c8f0" stroke="#2038c0" stroke-width="0.95"/>
<circle cx="15.4" cy="495.6" r="2.9" fill="#b4bcc8" stroke="#a0a4ac" stroke-width="0.95"/>
<path d="M6.3,502.4 V511.79999999999995 M15.4,502.4 V511.79999999999995" stroke="#f00000" stroke-width="1.2" fill="none"/><path d="M8,505.4 H12.6 M9.6,509.0 H14" stroke="#008000" stroke-width="1.3" fill="none"/><polygon points="14.6,505.4 11.4,503.0 11.4,507.79999999999995" fill="#008000"/><polygon points="7.4,509.0 10.6,506.59999999999997 10.6,511.4" fill="#008000"/>
<circle cx="6.3" cy="514.8" r="2.9" fill="#a8c8f0" stroke="#2038c0" stroke-width="0.95"/>
<circle cx="15.4" cy="514.8" r="2.9" fill="#a8c8f0" stroke="#2038c0" stroke-width="0.95"/>
<path d="M13.6,516.8 L17.2,512.8" stroke="#2038c0" stroke-width="1.1" fill="none"/>
</svg>
<div class="t" style="left:15px;top:160px;color:#e8e8e8;">T20天正建筑软...</div>
<div class="mi" style="top:189px;">设　　置</div>
<div class="mi" style="top:208px;">轴网柱子</div>
<div class="mi" style="top:231px;">绘制轴网</div>
<div class="mi" style="top:250px;">单轴绘制</div>
<div class="mi" style="top:269px;">墙生轴网</div>
<div class="mi" style="top:288px;">添加轴线</div>
<div class="mi" style="top:307px;">删除轴线</div>
<div class="mi" style="top:326px;">轴线裁剪</div>
<div class="mi" style="top:345px;">轴网合并</div>
<div class="mi" style="top:364px;">轴改线型</div>
<div class="mi" style="top:389px;">轴网标注</div>
<div class="mi" style="top:408px;">单轴标注</div>
<div class="mi" style="top:427px;">添补轴号</div>
<div class="mi" style="top:446px;">删除轴号</div>
<div class="mi" style="top:465px;">一轴多号</div>
<div class="mi" style="top:484px;">轴号隐现</div>
<div class="mi" style="top:503px;">主附转换</div>

<!-- CANVAS -->
<div class="t" style="left:158px;top:162px;color:#e0e0e0;letter-spacing:0.5px;">[−][俯视][二维线框]</div>
<svg style="left:0;top:0;" width="664" height="521" viewBox="0 0 664 521">
 <g stroke="#cc0000" stroke-width="1.4">
  <line x1="251.5" y1="236" x2="251.5" y2="431.6"/>
  <line x1="299.4" y1="236" x2="299.4" y2="431.6"/>
  <line x1="374.4" y1="236" x2="374.4" y2="431.6"/>
  <line x1="449.3" y1="236" x2="449.3" y2="431.6"/>
  <line x1="228" y1="258.9" x2="472.2" y2="258.9"/>
  <line x1="228" y1="320.4" x2="472.2" y2="320.4"/>
 </g>
 <g>
  <rect x="227.4" y="406.2" width="99.8" height="5.4" rx="1.5" fill="#111c48"/>
  <rect x="228" y="407.2" width="98.6" height="3.4" fill="#263c86"/>
  <rect x="228" y="408.2" width="98.6" height="1.5" fill="#a82c58"/>
  <rect x="357.2" y="406.2" width="111.4" height="5.4" rx="1.5" fill="#111c48"/>
  <rect x="357.8" y="407.2" width="110.2" height="3.4" fill="#263c86"/>
  <rect x="357.8" y="408.2" width="110.2" height="1.5" fill="#a82c58"/>
 </g>
 <circle cx="274.6" cy="406.3" r="11.9" fill="#fa5068"/>
 <circle cx="410.7" cy="409.4" r="11.8" fill="#fa5068"/>
 <text x="274.6" y="411.3" font-family="Liberation Serif, serif" font-weight="bold" font-size="14.5" fill="#fff" text-anchor="middle">1</text>
 <text x="410.7" y="414.3" font-family="Liberation Serif, serif" font-weight="bold" font-size="14.5" fill="#fff" text-anchor="middle">2</text>
 <rect x="317.5" y="446.5" width="6" height="6" fill="none" stroke="#f0f0f0" stroke-width="1" shape-rendering="crispEdges"/>
</svg>
</body>
</html>
